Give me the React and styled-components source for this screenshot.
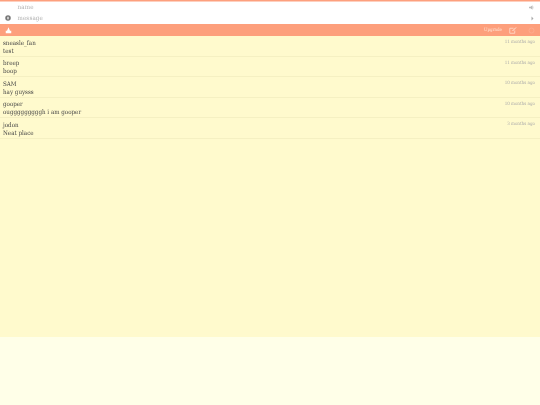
import React from "react";
import styled, { createGlobalStyle } from "styled-components";

const GlobalStyle = createGlobalStyle`
  html, body {
    margin: 0;
    padding: 0;
    background: #ffffe8;
    font-family: "DejaVu Serif Condensed", "DejaVu Serif", serif;
    font-stretch: condensed;
    text-rendering: geometricPrecision;
  }
`;

const Page = styled.div`
  width: 540px;
  height: 405px;
  overflow: hidden;
  background: #ffffe8;
  filter: blur(0.25px);
`;

const Form = styled.div`
  height: 22.5px;
  padding-top: 1.5px;
  background: #fff;
  box-shadow: inset 0 1.5px 0 #fda07e;
  display: flex;
  flex-direction: column;
`;

const FormRow = styled.div`
  height: 11px;
  display: flex;
  align-items: center;
  padding: 0 6px 0 5px;
`;

const IconSlot = styled.div`
  width: 12.5px;
  display: flex;
  align-items: center;
`;

const Placeholder = styled.div`
  flex: 1;
  font-size: 6.2px;
  letter-spacing: 0.15px;
  color: #b0b0b0;
`;

const Bar = styled.div`
  height: 12px;
  background: #fd9f7c;
  display: flex;
  align-items: center;
  padding: 0 5px;
  color: #fff;
`;

const Upgrade = styled.span`
  margin-left: auto;
  font-size: 4.5px;
  color: #ffe6d8;
`;

const BarIcon = styled.span`
  display: flex;
  margin-left: ${(p) => p.$gap}px;
`;

const List = styled.div`
  height: 301px;
  background: #fffacd;
`;

const Row = styled.div`
  height: 20.5px;
  box-sizing: border-box;
  border-bottom: 1px solid #f5f0c2;
  padding: 3.5px 5px 0 3px;
  position: relative;
  color: #444;
  font-size: 6.2px;
  line-height: 8.2px;
`;

const Time = styled.div`
  position: absolute;
  right: 5px;
  top: 3px;
  font-size: 4.5px;
  line-height: 7px;
  color: #aaa;
`;

const posts = [
  ["sneasle_fan", "test", "11 months ago"],
  ["breep", "boop", "11 months ago"],
  ["SAM", "hay guysss", "10 months ago"],
  ["gooper", "ougggggggggh i am gooper", "10 months ago"],
  ["jodon", "Neat place", "3 months ago"],
];

export default function App() {
  return (
    <Page>
      <GlobalStyle />
      <Form>
        <FormRow>
          <IconSlot />
          <Placeholder>name</Placeholder>
          <svg width="5" height="5" viewBox="0 0 10 10" fill="#bbb">
            <path d="M0 3.500h3L7 .5v9L3 6.500H0z" />
            <path d="M8.200 3v4" stroke="#bbb" />
          </svg>
        </FormRow>
        <FormRow>
          <IconSlot>
            <svg width="6" height="6" viewBox="0 0 12 12">
              <circle cx="6" cy="6" r="5.500" fill="#777" />
              <ellipse cx="6" cy="6" rx="1.800" ry="3" fill="#ddd" />
            </svg>
          </IconSlot>
          <Placeholder>message</Placeholder>
          <svg width="3" height="5" viewBox="0 0 6 10" fill="#aaa">
            <path d="M1 1l4 4-4 4z" />
          </svg>
        </FormRow>
      </Form>
      <Bar>
        <svg width="7" height="7" viewBox="0 0 14 14" fill="#fff">
          <path d="M7 0.500l3 7h2.500v5H1.500v-5H4z" />
        </svg>
        <Upgrade>Upgrade</Upgrade>
        <BarIcon $gap={7}>
          <svg width="8" height="7" viewBox="0 0 16 14" fill="none" stroke="#ffe6d8" strokeWidth="1.400">
            <path d="M9 2.500H1.500v10h10V7" />
            <path d="M7 8l7-7" strokeWidth="2" />
          </svg>
        </BarIcon>
        <BarIcon $gap={11}>
          <svg width="7" height="7" viewBox="0 0 14 14" fill="none" stroke="#fdb094" strokeWidth="1.400">
            <circle cx="7" cy="7" r="5" />
          </svg>
        </BarIcon>
      </Bar>
      <List>
        {posts.map(([name, text, time]) => (
          <Row key={name}>
            <div>{name}</div>
            <div>{text}</div>
            <Time>{time}</Time>
          </Row>
        ))}
      </List>
    </Page>
  );
}
